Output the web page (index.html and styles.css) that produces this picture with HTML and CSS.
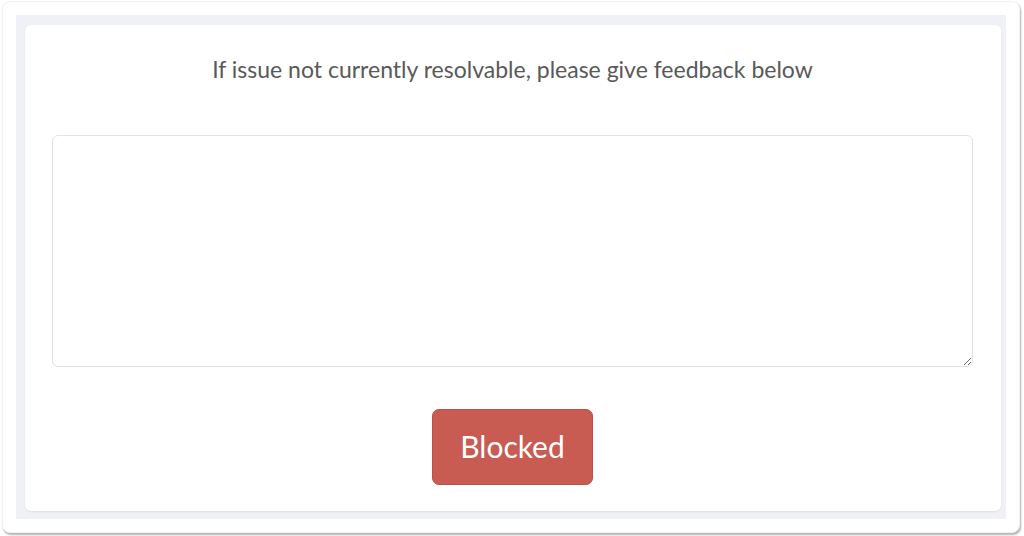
FILE: index.html
```html
<!DOCTYPE html>
<html lang="en">
<head>
    <meta charset="UTF-8">
    <meta name="viewport" content="width=device-width, initial-scale=1.0">
    <title>Feedback</title>
    <link rel="stylesheet" href="styles.css">
</head>
<body>
    <div class="frame">
        <div class="band">
            <div class="card">
                <p class="prompt">If issue not currently resolvable, please give feedback below</p>
                <textarea class="feedback"></textarea>
                <button class="blocked">Blocked</button>
            </div>
        </div>
    </div>
</body>
</html>
```

FILE: styles.css
```css
body {
    font-family: Lato, "Open Sans", sans-serif;
    background-color: #ffffff;
    margin: 0;
    padding: 1px 4px 3px 2px;
    height: 536px;
    box-sizing: border-box;
}

.frame {
    background-color: #ffffff;
    border-radius: 8px;
    border: 1px solid #f2f2f2;
    box-shadow: 1px 2px 2px rgba(0, 0, 0, 0.3);
    padding: 13px;
    height: 100%;
    box-sizing: border-box;
}

.band {
    background-color: #f0f1f7;
    padding: 10px 5px 8px 9px;
    height: 100%;
    box-sizing: border-box;
}

.card {
    background-color: #ffffff;
    border-radius: 6px;
    box-shadow: 0 1px 2px rgba(0, 0, 0, 0.08);
    height: 100%;
    box-sizing: border-box;
    padding: 32px 28px 0 27px;
    display: flex;
    flex-direction: column;
    align-items: center;
}

.prompt {
    margin: 0;
    font-size: 23px;
    line-height: 24px;
    color: #595959;
}

.feedback {
    margin-top: 54px;
    width: 100%;
    height: 232px;
    box-sizing: border-box;
    border: 1px solid #e2e2e6;
    border-radius: 6px;
    resize: vertical;
    outline: none;
}

.blocked {
    margin-top: 42px;
    width: 161px;
    height: 76px;
    padding: 0 0 3px;
    background-color: #c85b52;
    border: 1px solid #c04f47;
    border-radius: 7px;
    color: #ffffff;
    font-family: Lato, "Open Sans", sans-serif;
    font-size: 30px;
    cursor: pointer;
}
```
